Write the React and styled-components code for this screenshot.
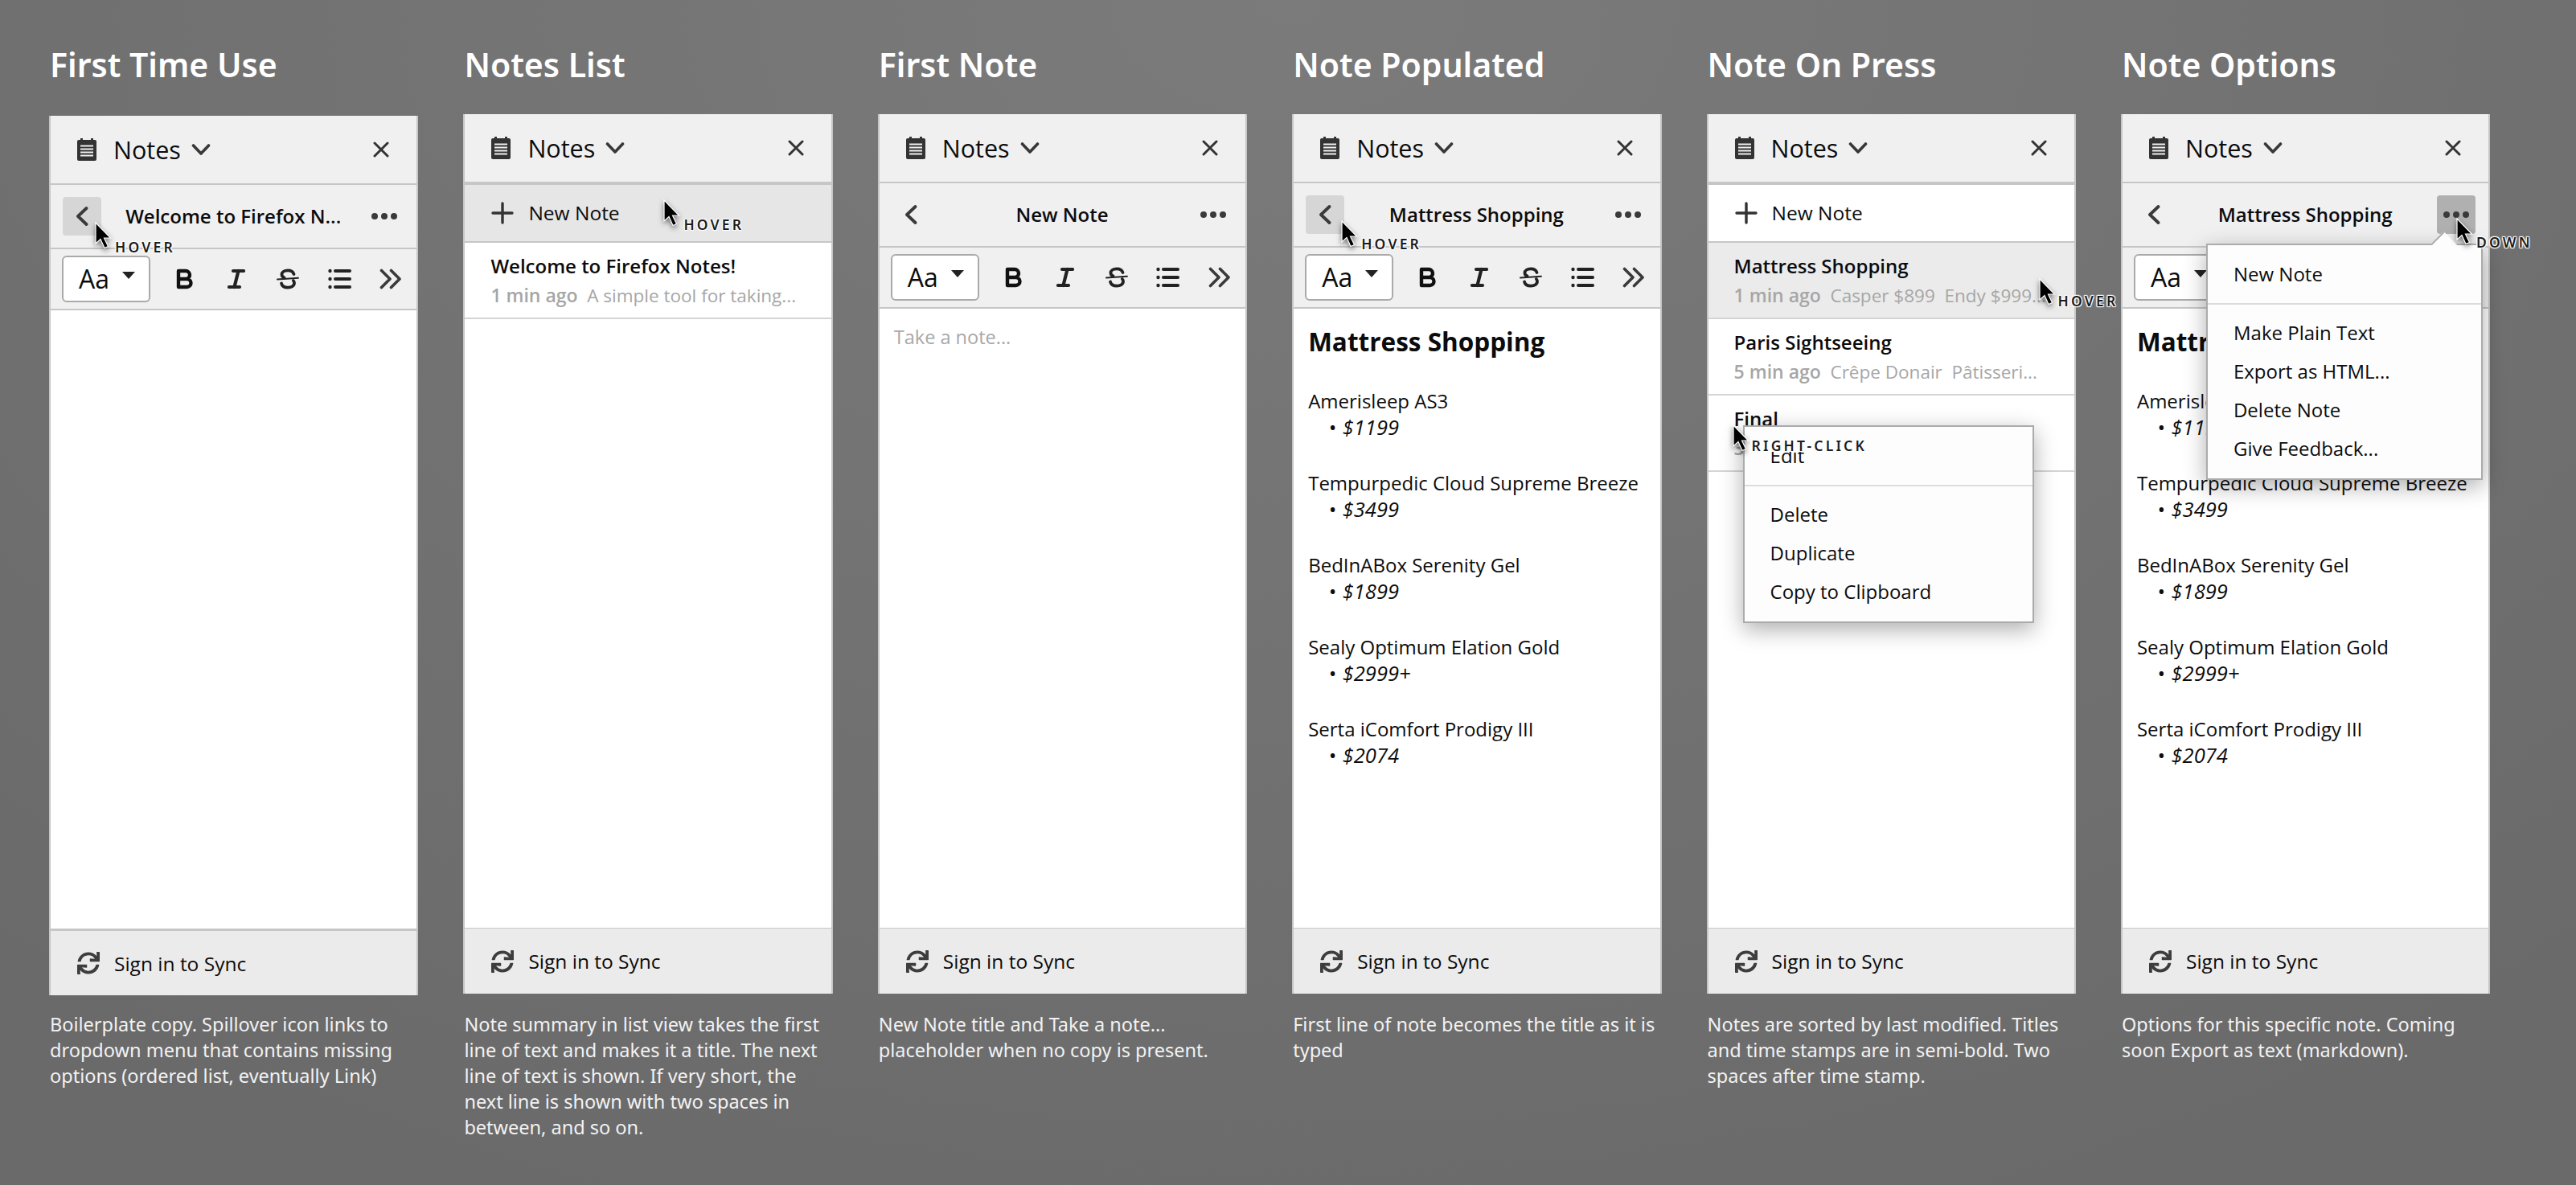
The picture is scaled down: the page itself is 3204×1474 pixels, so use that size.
import styled, { createGlobalStyle } from 'styled-components';
import { FaSync } from 'react-icons/fa';

const GlobalStyle = createGlobalStyle`
    html, body {
        margin: 0;
        padding: 0;
    }
    body {
        width: 3204px;
        height: 1474px;
        overflow: hidden;
        background: radial-gradient(ellipse 75% 110% at 50% 0, #7b7b7b, #6a6a6a);
        font-family: "Open Sans", "Noto Sans", sans-serif;
        color: #0c0c0d;
    }
    * {
        box-sizing: border-box;
    }
`;

const Page = styled.div`
    display: flex;
    gap: 56px;
    padding-left: 61px;
`;

const Column = styled.section`
    width: 459.4px;
    flex: none;
`;

const Heading = styled.h2`
    margin: 0;
    padding: 49px 0 31px 1px;
    font: 600 41px/62px "Noto Sans", sans-serif;
    color: #fff;
`;

const Panel = styled.div`
    position: relative;
    display: flex;
    flex-direction: column;
    height: 1094px;
    margin: ${(p) => (p.$drop ? '2px 0 -2px' : '0')};
    border-left: 2px solid #c6c6c6;
    border-right: 2px solid #c6c6c6;
    background: #fff;
`;

const Header = styled.header`
    display: flex;
    align-items: center;
    flex: none;
    height: ${(p) => (p.$thick ? 88 : 86)}px;
    padding: 0 34px 0 33px;
    background: #f0f0f0;
    border-bottom: ${(p) => (p.$thick ? 4 : 2)}px solid #c6c6c6;
`;

const HeaderLabel = styled.span`
    margin: 0 13px 0 21px;
    font-size: 30.5px;
    line-height: 40px;
`;

const CloseButton = styled.span`
    display: flex;
    margin-left: auto;
`;

const NavRow = styled.div`
    display: grid;
    grid-template-columns: 48px 1fr 48px;
    align-items: center;
    flex: none;
    height: 80px;
    padding: 0 16px 0 15px;
    background: #f0f0f0;
    border-bottom: 2px solid #c6c6c6;
`;

const NavButton = styled.span`
    display: flex;
    align-items: center;
    justify-content: center;
    width: 48px;
    height: 48px;
    border-radius: 4px;
    background: ${(p) => p.$bg || 'transparent'};
`;

const NavTitle = styled.div`
    text-align: center;
    font-size: 24px;
    font-weight: 600;
    line-height: 34px;
    white-space: nowrap;
`;

const Toolbar = styled.div`
    display: flex;
    align-items: center;
    flex: none;
    height: 76px;
    padding-left: 14px;
    background: #f0f0f0;
    border-bottom: 2px solid #c6c6c6;
`;

const FontSelect = styled.div`
    display: flex;
    align-items: center;
    width: 110px;
    height: 58px;
    margin-right: 11px;
    padding: 0 17px 0 19px;
    border: 2px solid #aaa;
    border-radius: 6px;
    background: #fff;
    font-size: 32px;
    line-height: 40px;

    &::after {
        content: '';
        margin: -10px 0 0 auto;
        border-left: 8px solid transparent;
        border-right: 8px solid transparent;
        border-top: 9px solid #222;
    }
`;

const ToolSlot = styled.span`
    display: flex;
    align-items: center;
    justify-content: center;
    width: 64px;
`;

const Body = styled.div`
    flex: 1;
    min-height: 0;
    background: #fff;
`;

const NoteBody = styled(Body)`
    padding: 21px 0 0 18px;
`;

const NoteTitle = styled.h3`
    margin: 0 0 37px;
    font-size: 31.5px;
    font-weight: 700;
    line-height: 40px;
`;

const Entry = styled.div`
    margin-bottom: 36px;
    font-size: 24px;
    line-height: 33px;
`;

const Price = styled.div`
    display: flex;
    gap: 8px;
    margin-left: 25px;
    font-size: 25.5px;
    font-style: italic;
`;

const Placeholder = styled(Body)`
    padding: 18px 0 0 18px;
    font-size: 23.5px;
    line-height: 34px;
    color: #a8a8a8;
`;

const NewNoteRow = styled.div`
    display: flex;
    align-items: center;
    flex: none;
    height: 72px;
    padding-left: 33px;
    background: ${(p) => (p.$hover ? '#e6e6e6' : '#fff')};
    border-bottom: 2px solid #c6c6c6;
`;

const NewNoteLabel = styled.span`
    margin-left: 18px;
    font-size: 24.5px;
    line-height: 32px;
`;

const NoteItem = styled.div`
    flex: none;
    height: 95px;
    padding: 10px 0 0 32px;
    background: ${(p) => (p.$hover ? '#ebebeb' : '#fff')};
    border-bottom: 2px solid #d4d4d4;
`;

const ItemTitle = styled.div`
    font-size: 24px;
    font-weight: 600;
    line-height: 37px;
    white-space: nowrap;
`;

const ItemMeta = styled.div`
    font-size: 22.5px;
    line-height: 37px;
    color: #a6a6a6;
    white-space: pre;

    b {
        font-size: 23px;
        font-weight: 600;
    }
`;

const Footer = styled.footer`
    display: flex;
    align-items: center;
    gap: 18px;
    flex: none;
    height: ${(p) => (p.$thick ? 83 : 82)}px;
    padding-left: 33px;
    background: #ebebeb;
    border-top: ${(p) => (p.$thick ? 3 : 1)}px solid #c6c6c6;
    font-size: 24.5px;

    svg {
        color: #3d3d3d;
    }
`;

const Menu = styled.div`
    position: absolute;
    left: ${(p) => p.$x}px;
    top: ${(p) => p.$y}px;
    width: ${(p) => p.$w}px;
    padding: 13px 0 12px;
    border: 2px solid #ababab;
    background: #fdfdfd;
    box-shadow: 0 8px 26px rgba(0, 0, 0, 0.32);
    font-size: 24px;

    &::before {
        content: ${(p) => (p.$notch ? "''" : 'none')};
        position: absolute;
        top: -12px;
        right: 34px;
        width: 22px;
        height: 22px;
        background: #fdfdfd;
        border-left: 2px solid #ababab;
        transform: rotate(45deg);
    }
`;

const MenuItem = styled.div`
    position: relative;
    height: 48px;
    padding-left: 32px;
    line-height: 46px;
    white-space: nowrap;
`;

const MenuDivider = styled.div`
    height: 2px;
    margin: 11px 0 12px;
    background: #dcdcdc;
`;

const Cursor = styled.svg`
    position: absolute;
    left: ${(p) => p.$x - 2}px;
    top: ${(p) => p.$y - 1}px;
    filter: drop-shadow(0 3px 3px rgba(0, 0, 0, 0.5));
    overflow: visible;
`;

const CursorLabel = styled.span`
    position: absolute;
    left: ${(p) => p.$x}px;
    top: ${(p) => p.$y}px;
    padding: ${(p) => (p.$solid ? '2px 2px 0' : '0')};
    margin: ${(p) => (p.$solid ? '-2px 0 0 -2px' : '0')};
    background: ${(p) => (p.$solid ? '#fdfdfd' : 'transparent')};
    font: 600 17.5px/15px "Noto Sans", sans-serif;
    letter-spacing: 3.2px;
    white-space: nowrap;
    color: #1c1c1c;
    text-shadow: 0 0 2px #fff, 0 0 2px #fff, 1px 1px 1px #fff, -1px -1px 1px #fff, 1px -1px 1px #fff, -1px 1px 1px #fff;
`;

const Caption = styled.div`
    margin-top: 22px;
    padding-left: 1px;
    font: 400 23.5px/32px "Noto Sans", sans-serif;
    color: #f2f2f2;
`;

const CaptionLine = styled.div`
    white-space: nowrap;
`;

function NotesIcon() {
    return (
        <svg width="24" height="28" viewBox="0 0 24 28">
            <rect x="0" y="2" width="24" height="26" rx="2" fill="#333" />
            <rect x="4" y="0" width="3" height="4" fill="#333" />
            <rect x="17" y="0" width="3" height="4" fill="#333" />
            <path d="M4 9.5h16M4 13.5h16M4 17.5h16M4 21.5h16" stroke="#f0f0f0" strokeWidth="2" />
        </svg>
    );
}

function ChevronDown() {
    return (
        <svg width="24" height="16" viewBox="0 0 24 16" fill="none" stroke="#383838" strokeWidth="3.6" strokeLinecap="round" strokeLinejoin="round">
            <path d="M2.5 3l9.5 10 9.5-10" />
        </svg>
    );
}

function CloseIcon() {
    return (
        <svg width="20" height="20" viewBox="0 0 20 20" fill="none" stroke="#333" strokeWidth="3" strokeLinecap="round">
            <path d="M2 2l16 16M18 2L2 18" />
        </svg>
    );
}

function BackIcon() {
    return (
        <svg width="16" height="24" viewBox="0 0 16 24" fill="none" stroke="#3a3a3a" strokeWidth="3.8" strokeLinecap="round" strokeLinejoin="round">
            <path d="M13.5 2L3 12l10.5 10" />
        </svg>
    );
}

function DotsIcon() {
    return (
        <svg width="32" height="8" viewBox="0 0 32 8" fill="#3a3a3a">
            <circle cx="4" cy="4" r="4" />
            <circle cx="16" cy="4" r="4" />
            <circle cx="28" cy="4" r="4" />
        </svg>
    );
}

function PlusIcon() {
    return (
        <svg width="28" height="28" viewBox="0 0 28 28" fill="none" stroke="#333" strokeWidth="3.4" strokeLinecap="round">
            <path d="M14 2v24M2 14h24" />
        </svg>
    );
}

function BoldIcon() {
    return (
        <svg width="22" height="26" viewBox="0 0 22 26" fill="none" stroke="#111" strokeWidth="4.4" strokeLinejoin="round">
            <path d="M3 3h9a4.7 4.7 0 0 1 0 10H3zM3 13h10.5a5 5 0 0 1 0 10H3z" />
        </svg>
    );
}

function ItalicIcon() {
    return (
        <svg width="22" height="26" viewBox="0 0 22 26" fill="none" stroke="#222" strokeWidth="4.2" strokeLinecap="round">
            <path d="M7 3h13M2 23h13M13.5 3L8.5 23" />
        </svg>
    );
}

function StrikeIcon() {
    return (
        <svg width="28" height="26" viewBox="0 0 28 26" fill="none" stroke="#222" strokeLinecap="round">
            <path d="M21.5 7c-1-3-4-4.6-7.5-4.6-4.300 0-7.500 2-7.500 5 0 2 1 3.300 3 4M6 18.500c.8 3.300 4 5.200 8 5.200 4.500 0 8-2 8-5.600 0-1.300-.4-2.300-1.200-3.100" strokeWidth="3.8" />
            <path d="M1 13.500l26-1.800" strokeWidth="2" />
        </svg>
    );
}

function ListIcon() {
    return (
        <svg width="29" height="26" viewBox="0 0 29 26" fill="#222">
            <circle cx="2.500" cy="3" r="2.200" />
            <circle cx="2.500" cy="13" r="2.200" />
            <circle cx="2.500" cy="23" r="2.200" />
            <rect x="7" y="1" width="22" height="4" rx="2" />
            <rect x="7" y="11" width="22" height="4" rx="2" />
            <rect x="7" y="21" width="22" height="4" rx="2" />
        </svg>
    );
}

function SpilloverIcon() {
    return (
        <svg width="28" height="26" viewBox="0 0 28 26" fill="none" stroke="#3a3a3a" strokeWidth="3.600" strokeLinecap="round" strokeLinejoin="round">
            <path d="M2.500 2.500L13 13 2.500 23.500M14.500 2.500L25 13 14.500 23.500" />
        </svg>
    );
}

function Pointer({ x, y, label, labelX, labelY, solid }) {
    return (
        <>
            <Cursor $x={x} $y={y} width="22" height="35" viewBox="0 0 22 35">
                <path d="M2 1v26l6-5.500 5 11 4.500-2-5-10.500h8z" fill="#000" stroke="#fff" strokeWidth="1.200" />
            </Cursor>
            <CursorLabel $x={labelX} $y={labelY} $solid={solid}>{label}</CursorLabel>
        </>
    );
}

function Bar({ thick }) {
    return (
        <Header $thick={thick}>
            <NotesIcon />
            <HeaderLabel>Notes</HeaderLabel>
            <ChevronDown />
            <CloseButton><CloseIcon /></CloseButton>
        </Header>
    );
}

function Nav({ title, backBg, dotsBg }) {
    return (
        <NavRow>
            <NavButton $bg={backBg}><BackIcon /></NavButton>
            <NavTitle>{title}</NavTitle>
            <NavButton $bg={dotsBg}><DotsIcon /></NavButton>
        </NavRow>
    );
}

function Tools() {
    return (
        <Toolbar>
            <FontSelect>Aa</FontSelect>
            <ToolSlot><BoldIcon /></ToolSlot>
            <ToolSlot><ItalicIcon /></ToolSlot>
            <ToolSlot><StrikeIcon /></ToolSlot>
            <ToolSlot><ListIcon /></ToolSlot>
            <ToolSlot><SpilloverIcon /></ToolSlot>
        </Toolbar>
    );
}

function Sync({ thick }) {
    return (
        <Footer $thick={thick}>
            <FaSync size={28} />
            <span>Sign in to Sync</span>
        </Footer>
    );
}

const mattresses = [
    ['Amerisleep AS3', '$1199'],
    ['Tempurpedic Cloud Supreme Breeze', '$3499'],
    ['BedInABox Serenity Gel', '$1899'],
    ['Sealy Optimum Elation Gold', '$2999+'],
    ['Serta iComfort Prodigy III', '$2074'],
];

function MattressNote() {
    return (
        <NoteBody>
            <NoteTitle>Mattress Shopping</NoteTitle>
            {mattresses.map(([name, price]) => (
                <Entry key={name}>
                    {name}
                    <Price><span>•</span><span>{price}</span></Price>
                </Entry>
            ))}
        </NoteBody>
    );
}

function Item({ title, time, text, hover }) {
    return (
        <NoteItem $hover={hover}>
            <ItemTitle>{title}</ItemTitle>
            <ItemMeta><b>{time}</b>{'  '}{text}</ItemMeta>
        </NoteItem>
    );
}

function Notes({ lines }) {
    return (
        <Caption>
            {lines.map((line) => <CaptionLine key={line}>{line}</CaptionLine>)}
        </Caption>
    );
}

export default function App() {
    return (
        <Page>
            <GlobalStyle />

            <Column>
                <Heading>First Time Use</Heading>
                <Panel $drop>
                    <Bar />
                    <Nav title="Welcome to Firefox N..." backBg="#d6d6d6" />
                    <Tools />
                    <Body />
                    <Sync thick />
                    <Pointer x={56} y={133} label="HOVER" labelX={80} labelY={156} />
                </Panel>
                <Notes lines={['Boilerplate copy. Spillover icon links to', 'dropdown menu that contains missing', 'options (ordered list, eventually Link)']} />
            </Column>

            <Column>
                <Heading>Notes List</Heading>
                <Panel>
                    <Bar thick />
                    <NewNoteRow $hover><PlusIcon /><NewNoteLabel>New Note</NewNoteLabel></NewNoteRow>
                    <Item title="Welcome to Firefox Notes!" time="1 min ago" text="A simple tool for taking..." />
                    <Body />
                    <Sync />
                    <Pointer x={248} y={107} label="HOVER" labelX={272} labelY={130} />
                </Panel>
                <Notes lines={['Note summary in list view takes the first', 'line of text and makes it a title. The next', 'line of text is shown. If very short, the', 'next line is shown with two spaces in', 'between, and so on.']} />
            </Column>

            <Column>
                <Heading>First Note</Heading>
                <Panel>
                    <Bar />
                    <Nav title="New Note" />
                    <Tools />
                    <Placeholder>Take a note...</Placeholder>
                    <Sync />
                </Panel>
                <Notes lines={['New Note title and Take a note...', 'placeholder when no copy is present.']} />
            </Column>

            <Column>
                <Heading>Note Populated</Heading>
                <Panel>
                    <Bar />
                    <Nav title="Mattress Shopping" backBg="#d6d6d6" />
                    <Tools />
                    <MattressNote />
                    <Sync />
                    <Pointer x={60} y={133} label="HOVER" labelX={84} labelY={154} />
                </Panel>
                <Notes lines={['First line of note becomes the title as it is', 'typed']} />
            </Column>

            <Column>
                <Heading>Note On Press</Heading>
                <Panel>
                    <Bar thick />
                    <NewNoteRow><PlusIcon /><NewNoteLabel>New Note</NewNoteLabel></NewNoteRow>
                    <Item hover title="Mattress Shopping" time="1 min ago" text="Casper $899  Endy $999..." />
                    <Item title="Paris Sightseeing" time="5 min ago" text="Crêpe Donair  Pâtisseri..." />
                    <Item title="Final" time="3 min ago" text="Notes" />
                    <Body />
                    <Sync />
                    <Menu $x={43} $y={387} $w={362}>
                        <MenuItem>Edit</MenuItem>
                        <MenuDivider />
                        <MenuItem>Delete</MenuItem>
                        <MenuItem>Duplicate</MenuItem>
                        <MenuItem>Copy to Clipboard</MenuItem>
                    </Menu>
                    <Pointer x={412} y={205} label="HOVER" labelX={435} labelY={225} />
                    <Pointer x={31} y={387} label="RIGHT-CLICK" labelX={54} labelY={405} solid />
                </Panel>
                <Notes lines={['Notes are sorted by last modified. Titles', 'and time stamps are in semi-bold. Two', 'spaces after time stamp.']} />
            </Column>

            <Column>
                <Heading>Note Options</Heading>
                <Panel>
                    <Bar />
                    <Nav title="Mattress Shopping" dotsBg="#b0b0b0" />
                    <Tools />
                    <MattressNote />
                    <Sync />
                    <Menu $x={104} $y={161} $w={344} $notch>
                        <MenuItem>New Note</MenuItem>
                        <MenuDivider />
                        <MenuItem>Make Plain Text</MenuItem>
                        <MenuItem>Export as HTML...</MenuItem>
                        <MenuItem>Delete Note</MenuItem>
                        <MenuItem>Give Feedback...</MenuItem>
                    </Menu>
                    <Pointer x={416} y={130} label="DOWN" labelX={440} labelY={152} />
                </Panel>
                <Notes lines={['Options for this specific note. Coming', 'soon Export as text (markdown).']} />
            </Column>
        </Page>
    );
}
